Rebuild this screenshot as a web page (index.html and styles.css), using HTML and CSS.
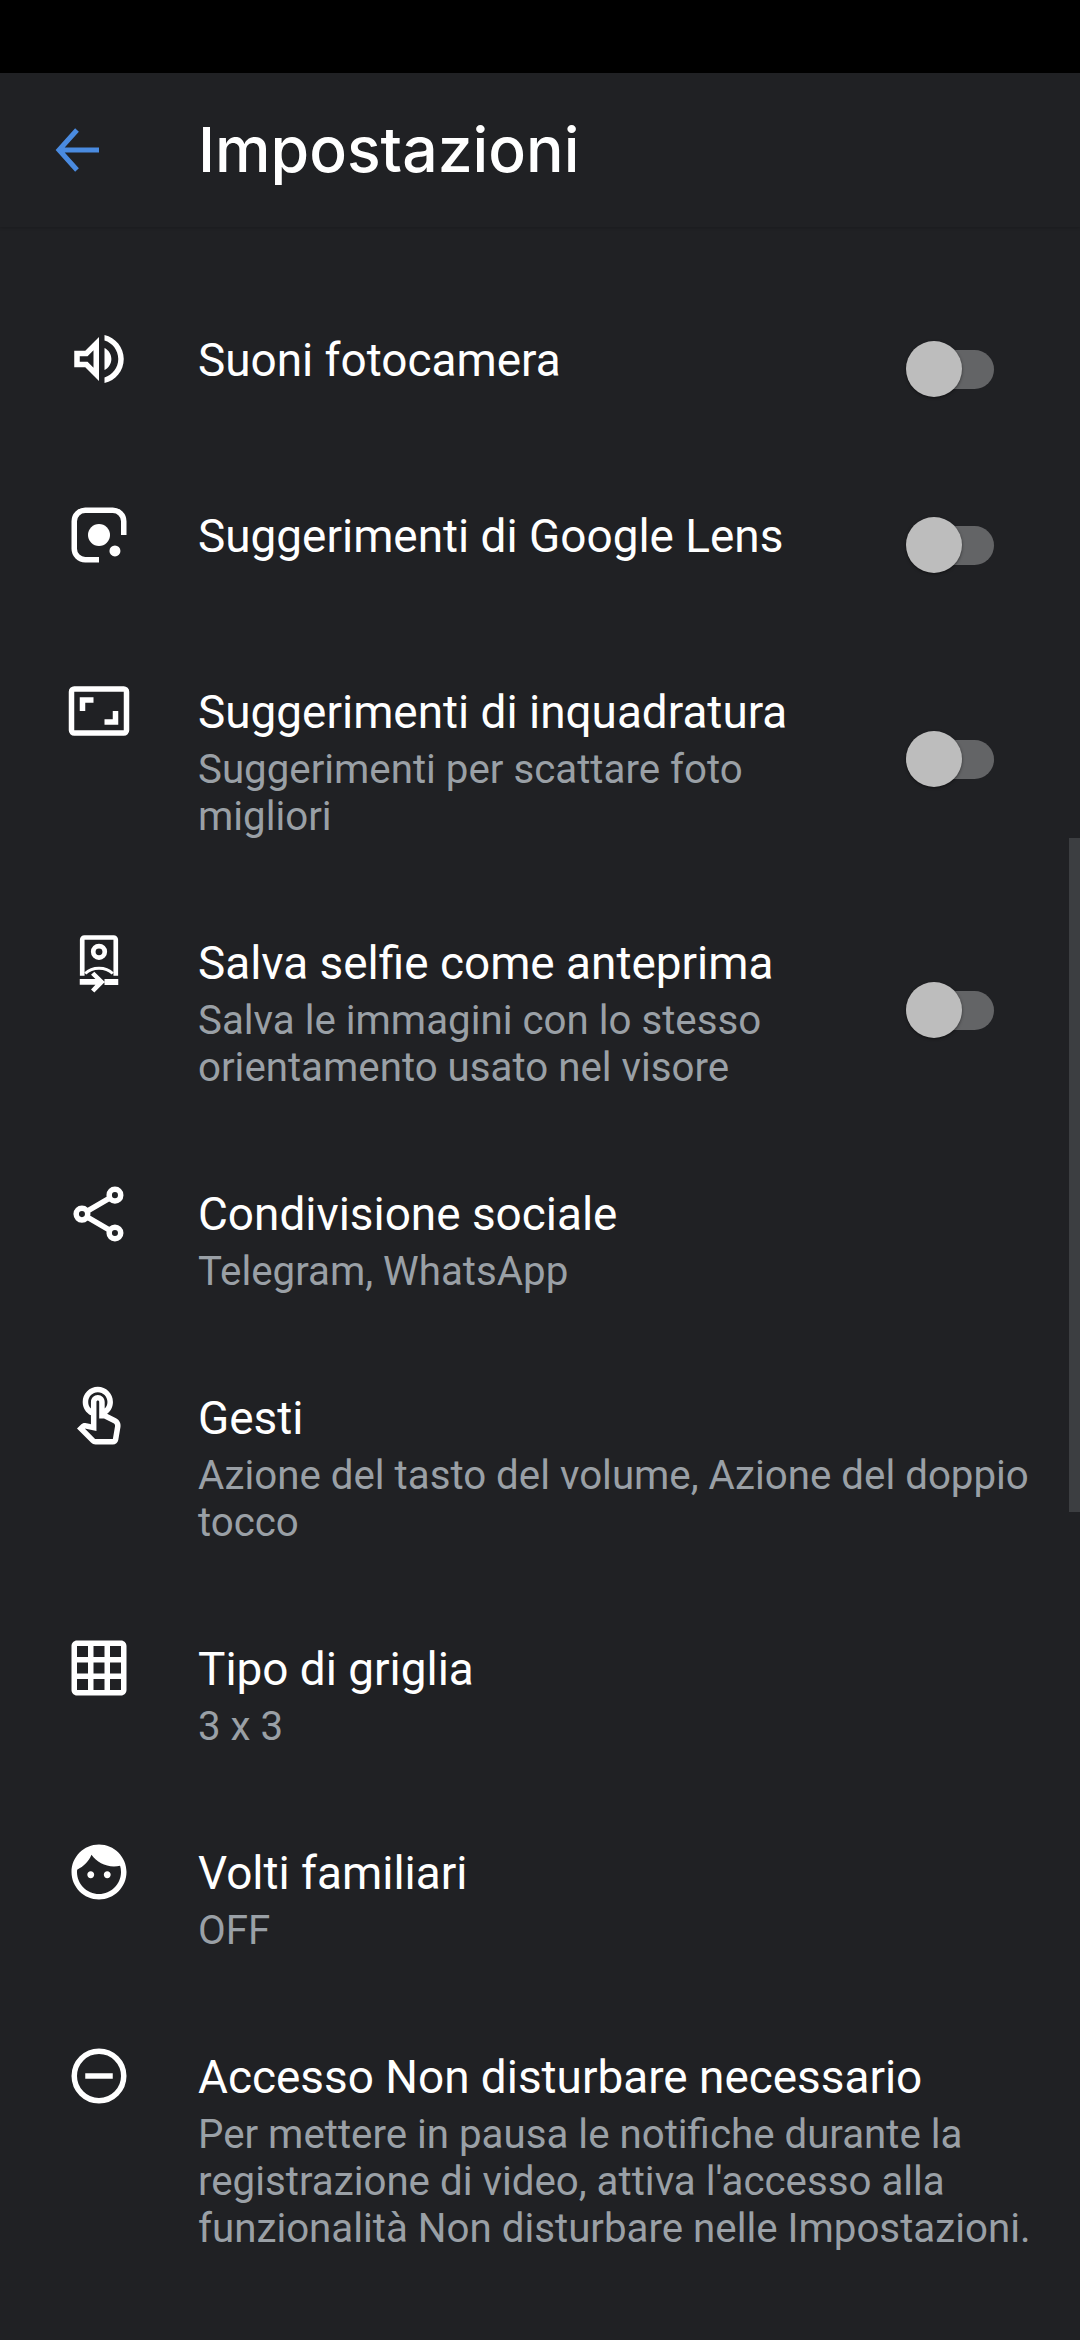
FILE: index.html
```html
<!DOCTYPE html>
<html lang="it">
<head>
<meta charset="utf-8">
<title>Impostazioni</title>
<link rel="stylesheet" href="styles.css">
</head>
<body>
<div class="status"></div>
<header class="bar">
  <svg class="back" viewBox="0 0 44 44"><path d="M44 22H4M22 2 4 22l18 20" fill="none" stroke="#4a8be0" stroke-width="5"/></svg>
  <h1 class="heading">Impostazioni</h1>
</header>
<main class="list">
  <div class="thumb-scroll"></div>
  <section class="row">
    <svg class="ico" viewBox="0 0 24 24"><path d="M3 9v6h4l5 5V4L7 9H3zm7-.17v6.34L7.83 13H5v-2h2.83L10 8.83zM16.5 12c0-1.77-1.02-3.29-2.5-4.03v8.05c1.48-.73 2.5-2.25 2.5-4.02zM14 3.23v2.06c2.89.86 5 3.54 5 6.71s-2.11 5.85-5 6.71v2.06c4.01-.91 7-4.49 7-8.77 0-4.28-2.99-7.86-7-8.77z"/></svg>
    <div class="txt"><div class="title">Suoni fotocamera</div></div>
    <div class="sw"><span class="knob"></span></div>
  </section>
  <section class="row">
    <svg class="ico" viewBox="0 0 24 24"><path class="ln" d="M12 21H7a4 4 0 0 1-4-4V7a4 4 0 0 1 4-4h10a4 4 0 0 1 4 4v5"/><circle cx="12" cy="12" r="4"/><circle cx="17.8" cy="17.8" r="2"/></svg>
    <div class="txt"><div class="title">Suggerimenti di Google Lens</div></div>
    <div class="sw"><span class="knob"></span></div>
  </section>
  <section class="row">
    <svg class="ico" viewBox="0 0 24 24"><rect class="ln" x="2" y="4" width="20" height="16" rx="1"/><path d="M5 7h5v2H7v3H5zM19 17h-5v-2h3v-3h2z"/></svg>
    <div class="txt"><div class="title">Suggerimenti di inquadratura</div><div class="sub">Suggerimenti per scattare foto migliori</div></div>
    <div class="sw"><span class="knob"></span></div>
  </section>
  <section class="row">
    <svg class="ico" viewBox="0 0 24 24"><path class="ln th" d="M5.9 17V3.9a.8.8 0 0 1 .8-.8h10.6a.8.8 0 0 1 .8.8V17"/><circle class="ln th" cx="12" cy="8.3" r="2.1"/><path class="ln t" d="M7 16.2c1.2-1.2 3-1.9 5-1.9s3.8.7 5 1.9"/><path d="M5 18.2h5.7l-1.6-1.6 1.2-1.1 3.8 3.8-3.8 3.8-1.2-1.1 1.6-1.7H5zM14 18.2h5v2.2h-5z"/></svg>
    <div class="txt"><div class="title">Salva selfie come anteprima</div><div class="sub">Salva le immagini con lo stesso orientamento usato nel visore</div></div>
    <div class="sw"><span class="knob"></span></div>
  </section>
  <section class="row">
    <svg class="ico" viewBox="0 0 24 24"><path class="ln" d="M7.9 11.2l7.8-4.5M7.9 13.6l7.8 4.5"/><circle class="ln" cx="17.8" cy="5.5" r="2.1"/><circle class="ln" cx="5.8" cy="12.4" r="2.1"/><circle class="ln" cx="17.8" cy="19.3" r="2.1"/></svg>
    <div class="txt"><div class="title">Condivisione sociale</div><div class="sub">Telegram, WhatsApp</div></div>
  </section>
  <section class="row">
    <svg class="ico" viewBox="0 0 24 24"><path d="M18.19 12.44l-3.24-1.62c1.29-1 2.12-2.56 2.12-4.32 0-3.03-2.47-5.5-5.5-5.5s-5.5 2.47-5.5 5.5c0 2.13 1.22 3.98 3 4.89v3.26c-2.15-.46-2.02-.44-2.26-.44-.53 0-1.03.21-1.41.59L4 16.22l5.09 5.09C9.52 21.75 10.12 22 10.74 22h6.3c.98 0 1.81-.7 1.97-1.67l.8-4.71c.22-1.3-.43-2.58-1.62-3.18zm-.35 2.85l-.8 4.71h-6.3c-.09 0-.17-.04-.24-.1l-3.68-3.68 4.25.89V6.5c0-.28.22-.5.5-.5s.5.22.5.5v6h1.76l3.46 1.73c.4.2.62.63.55 1.06zM8.07 6.5c0-1.93 1.57-3.5 3.5-3.5s3.5 1.57 3.5 3.5c0 .95-.38 1.81-1 2.44V6.5c0-1.38-1.12-2.5-2.5-2.5s-2.5 1.12-2.5 2.5v2.44c-.62-.63-1-1.49-1-2.44z"/></svg>
    <div class="txt"><div class="title">Gesti</div><div class="sub">Azione del tasto del volume, Azione del doppio tocco</div></div>
  </section>
  <section class="row">
    <svg class="ico" viewBox="0 0 24 24"><path d="M20 2H4c-1.1 0-2 .9-2 2v16c0 1.1.9 2 2 2h16c1.1 0 2-.9 2-2V4c0-1.1-.9-2-2-2zM8 20H4v-4h4v4zm0-6H4v-4h4v4zm0-6H4V4h4v4zm6 12h-4v-4h4v4zm0-6h-4v-4h4v4zm0-6h-4V4h4v4zm6 12h-4v-4h4v4zm0-6h-4v-4h4v4zm0-6h-4V4h4v4z"/></svg>
    <div class="txt"><div class="title">Tipo di griglia</div><div class="sub">3 x 3</div></div>
  </section>
  <section class="row">
    <svg class="ico" viewBox="0 0 24 24"><path d="M9 11.75c-.69 0-1.25.56-1.25 1.25s.56 1.25 1.25 1.25 1.25-.56 1.25-1.25-.56-1.25-1.25-1.25zm6 0c-.69 0-1.25.56-1.25 1.25s.56 1.25 1.25 1.25 1.25-.56 1.25-1.25-.56-1.25-1.25-1.25zM12 2C6.48 2 2 6.48 2 12s4.48 10 10 10 10-4.48 10-10S17.52 2 12 2zm0 18c-4.41 0-8-3.59-8-8 0-.29.02-.58.05-.86 2.36-1.05 4.23-2.98 5.21-5.37C11.07 8.33 14.05 10 17.42 10c.78 0 1.53-.09 2.25-.26.21.71.33 1.47.33 2.26 0 4.41-3.59 8-8 8z"/></svg>
    <div class="txt"><div class="title">Volti familiari</div><div class="sub">OFF</div></div>
  </section>
  <section class="row">
    <svg class="ico" viewBox="0 0 24 24"><circle class="ln" cx="12" cy="12" r="9"/><path d="M7 11h10v2H7z"/></svg>
    <div class="txt"><div class="title">Accesso Non disturbare necessario</div><div class="sub">Per mettere in pausa le notifiche durante la registrazione di video, attiva l'accesso alla funzionalità Non disturbare nelle Impostazioni.</div></div>
  </section>
</main>
</body>
</html>
```
FILE: styles.css
```css
* { box-sizing: border-box; }
html, body { margin: 0; height: 2340px; background: #202124; overflow: hidden; }
body { font-family: Roboto, "Noto Sans", sans-serif; color: #fff; }
.status { height: 73px; background: #000; }
.bar { height: 154px; display: flex; align-items: center; padding-left: 55px; background: #202124; box-shadow: 0 1px 3px rgba(0,0,0,.18); position: relative; z-index: 1; }
.back { width: 44px; height: 44px; flex: none; }
.heading { margin: -3px 0 0 99px; font-family: Inter, Roboto, sans-serif; font-weight: 500; font-size: 62.5px; line-height: 72px; color: #fff; }
.list { padding-top: 53px; position: relative; }
.thumb-scroll { position: absolute; top: 611px; right: 0; width: 11px; height: 674px; background: #3c3e41; }
.row { display: flex; align-items: center; min-height: 176px; padding: 52px 0 43px 0; }
.ico { width: 66px; height: 66px; flex: none; align-self: flex-start; margin: -6px 66px 0 66px; fill: #fff; }
.ln { fill: none; stroke: #fff; stroke-width: 2; }
.th { stroke-width: 1.7; }
.t { stroke-width: 1.1; }
.txt { flex: 1; min-width: 0; align-self: flex-start; padding-right: 30px; }
.title { font-size: 45.9px; line-height: 56px; color: #fff; }
.sub { margin-top: 6px; font-size: 40.25px; line-height: 47px; color: #9aa0a6; }
.sw { width: 88px; height: 56px; flex: none; position: relative; margin: -7px 86px 0 16px; }
.sw::before { content: ""; position: absolute; left: 14px; right: 0; top: 9px; height: 39px; border-radius: 20px; background: #636466; }
.knob { position: absolute; left: 0; top: 0; width: 56px; height: 56px; border-radius: 50%; background: #bdbdbd; box-shadow: 0 1px 3px rgba(0,0,0,.5); }
```
